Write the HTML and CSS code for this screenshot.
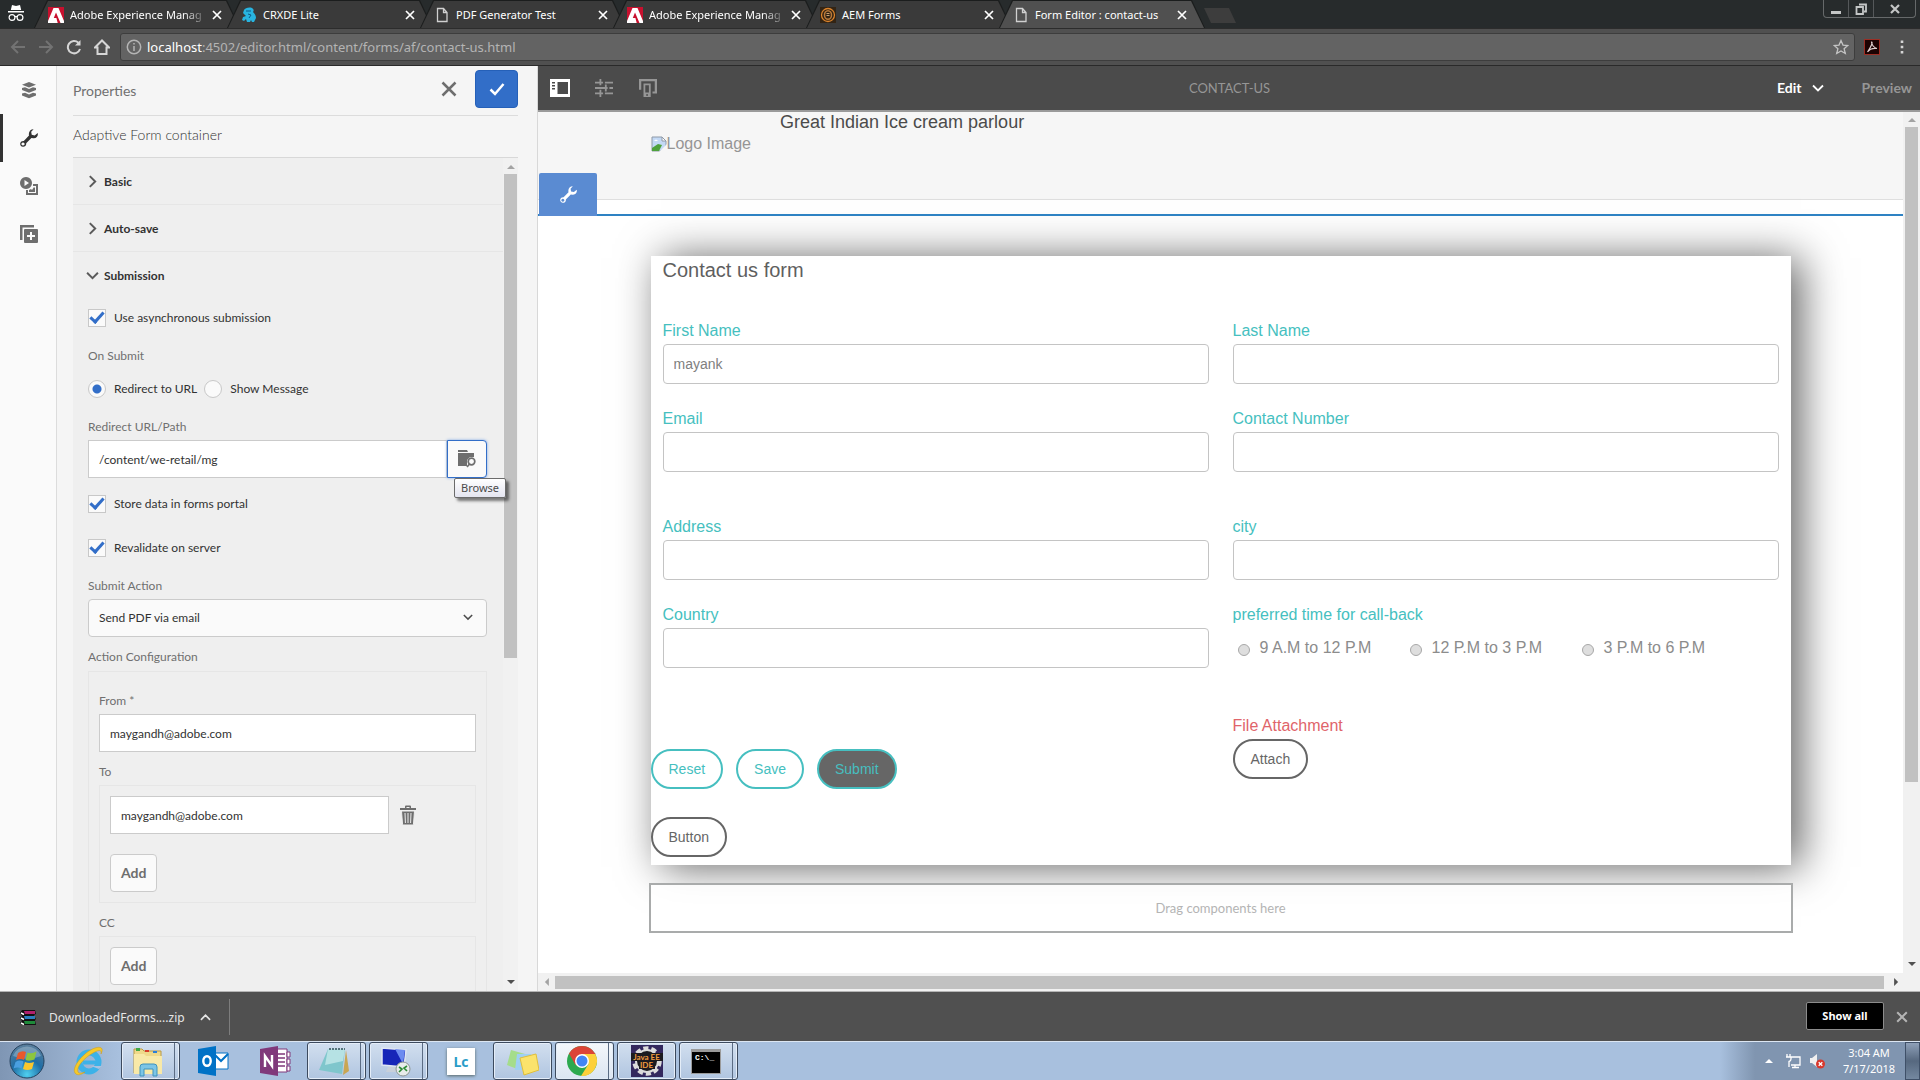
FILE: index.html
```html
<!DOCTYPE html>
<html lang="en">
  <head>
    <meta charset="UTF-8" />
    <meta name="viewport" content="width=device-width, initial-scale=1.0" />
    <title>Form Editor : contact-us</title>
    <link rel="stylesheet" href="styles.css">
  </head>
  <body>
    <!-- shared symbols -->
    <svg class="symbols" aria-hidden="true">
      <symbol id="adobe" viewBox="0 0 16 16">
        <rect width="16" height="16" fill="#c8102e" />
        <path d="M0 16V14L5.500 1h5L16 14v2h-3.500L8 5.500 5.800 11h2.600l1.300 5z" fill="#fff" />
      </symbol>
      <symbol id="page" viewBox="0 0 12 16">
        <path d="M1.500 1.500h6l3.500 4v9h-9.500zM7.500 1.500v4H11" fill="none" stroke="#d0d0d0" stroke-width="1.300" />
      </symbol>
      <symbol id="cross" viewBox="0 0 10 10">
        <path d="M1 1l8 8M9 1L1 9" fill="none" stroke="currentColor" stroke-width="1.700" />
      </symbol>
      <symbol id="wrench" viewBox="0 0 18 18">
        <path fill="currentColor" fill-rule="evenodd" d="M13.600 0.200L11.200 2.800l.5 3 3 .6L17.700 4c.7 2.500-1 5.400-4.200 5.200L11.400 9l-5.200 5.200c.3 2-1.200 3.700-3.200 3.600C1 17.700-.2 15.800.3 14.200c.4-1.600 1.900-2.500 3.500-2.200L9 6.600C8.200 2.900 10.400.2 13.600.2zM3 13.400a1.600 1.600 0 1 0 .01 0z" />
      </symbol>
      <symbol id="chevron" viewBox="0 0 12 12">
        <path d="M1 3.500l5 5 5-5" fill="none" stroke="currentColor" stroke-width="1.800" />
      </symbol>
    </svg>

    <!-- tab strip -->
    <header class="tabs">
      <svg class="incognito" viewBox="0 0 18 18">
        <path d="M5 1l4 1 4-1 1.200 5H3.800zM1 7h16v1.500H1z" fill="#fff" />
        <g fill="none" stroke="#fff" stroke-width="1.200"><circle cx="5" cy="13.500" r="2.900" /><circle cx="13" cy="13.500" r="2.900" /><path d="M8 13q1-1 2 0" /></g>
      </svg>
      <div class="tab"><svg class="favicon"><use href="#adobe" /></svg><span class="tab-title fade">Adobe Experience Manag</span><button class="tab-close" aria-label="Close tab"><svg><use href="#cross" /></svg></button></div>
      <div class="tab">
        <svg class="favicon" viewBox="0 0 16 16"><path d="M3 3c1-2 5-3 8-2 2 1 2 3 1 4 2 2 3 4 3 6l-2 4h-2l-1-2-1 2H6l-1-3-2 2-2-1 1-3 3-1-3-3z" fill="#28b4e0" /><path d="M5 4h5M7 7l3 1-2 3" stroke="#0d5a8a" fill="none" /></svg>
        <span class="tab-title">CRXDE Lite</span><button class="tab-close" aria-label="Close tab"><svg><use href="#cross" /></svg></button>
      </div>
      <div class="tab"><svg class="favicon"><use href="#page" /></svg><span class="tab-title">PDF Generator Test</span><button class="tab-close" aria-label="Close tab"><svg><use href="#cross" /></svg></button></div>
      <div class="tab"><svg class="favicon"><use href="#adobe" /></svg><span class="tab-title fade">Adobe Experience Manag</span><button class="tab-close" aria-label="Close tab"><svg><use href="#cross" /></svg></button></div>
      <div class="tab">
        <svg class="favicon" viewBox="0 0 16 16"><rect width="16" height="16" fill="#332414" /><circle cx="8" cy="8" r="6.500" fill="none" stroke="#d9822b" stroke-width="1.300" /><ellipse cx="8" cy="8" rx="3.500" ry="4.300" fill="none" stroke="#b9793a" stroke-width="1.500" /><path d="M6.500 6.500h3M6.500 8.500h3" stroke="#c9a070" /></svg>
        <span class="tab-title">AEM Forms</span><button class="tab-close" aria-label="Close tab"><svg><use href="#cross" /></svg></button>
      </div>
      <div class="tab active"><svg class="favicon"><use href="#page" /></svg><span class="tab-title">Form Editor : contact-us</span><button class="tab-close" aria-label="Close tab"><svg><use href="#cross" /></svg></button></div>
      <button class="new-tab" aria-label="New tab"></button>
      <div class="window-buttons">
        <button aria-label="Minimize"><svg viewBox="0 0 12 12"><path d="M1 8h10v3H1z" fill="#c4c6c6" /></svg></button>
        <button aria-label="Restore"><svg viewBox="0 0 12 12"><path d="M4 1.500h7v7H9M1.500 4h6.500v7H1.500z" fill="none" stroke="#c4c6c6" stroke-width="1.800" /></svg></button>
        <button class="wide" aria-label="Close"><svg viewBox="0 0 12 12"><path d="M2 2l8 8M10 2l-8 8" stroke="#c4c6c6" stroke-width="2.200" /></svg></button>
      </div>
    </header>

    <!-- address bar -->
    <nav class="address-bar">
      <button class="dim" aria-label="Back"><svg viewBox="0 0 16 16"><path d="M15 8H2M8 2L2 8l6 6" /></svg></button>
      <button class="dim" aria-label="Forward"><svg viewBox="0 0 16 16"><path d="M1 8h13M8 2l6 6-6 6" /></svg></button>
      <button aria-label="Reload"><svg viewBox="0 0 16 16"><path d="M14 10a6.200 6.200 0 1 1-1.600-6.300" /><path d="M14.500 1v5.500H9z" fill="#d6d6d6" stroke="none" /></svg></button>
      <button aria-label="Home"><svg viewBox="0 0 16 16"><path d="M1 8.500L8 1.500l7 7h-2.500V15h-9V8.500z" /></svg></button>
      <div class="omnibox">
        <svg class="info" viewBox="0 0 16 16"><circle cx="8" cy="8" r="6.700" /><path d="M8 7v5M8 4v1.600" /></svg>
        <span class="url"><b>localhost</b>:4502/editor.html/content/forms/af/contact-us.html</span>
        <svg class="star" viewBox="0 0 16 16"><path d="M8 1.500l2 4.600 4.800.4-3.700 3.200 1.200 4.800L8 12l-4.300 2.500 1.200-4.800L1.200 6.500 6 6.100z" /></svg>
      </div>
      <svg class="pdf" viewBox="0 0 16 16"><rect x="0.500" y="0.500" width="15" height="15" fill="#1c0202" stroke="#9c2e24" /><path d="M7.500 3c1.500 0 0 4-4 10 2-3 5-4 9.500-3.500-3-.5-5.500-4-5.500-6.500z" fill="none" stroke="#e0d0d0" stroke-width="1.200" /></svg>
      <button class="menu" aria-label="Menu"><svg viewBox="0 0 16 16"><path d="M6.700 1.500h2.600v2.600H6.700zM6.700 6.700h2.600v2.600H6.700zM6.700 11.900h2.600v2.600H6.700z" fill="#d6d6d6" stroke="none" /></svg></button>
    </nav>

    <main class="editor">
      <!-- icon rail -->
      <nav class="rail">
        <button aria-label="Content tree"><svg viewBox="0 0 18 18"><path d="M9 1l7 2.700L9 6.400 2 3.700z" /><path d="M2 7l3-.7L9 8l4-1.700 3 .7v2l-7 2.800L2 9z" /><path d="M2 12.500l3-.7 4 1.700 4-1.700 3 .7v2L9 17.300 2 14.500z" /></svg></button>
        <button class="selected" aria-label="Properties"><svg><use href="#wrench" /></svg></button>
        <button aria-label="Assets"><svg viewBox="0 0 18 18"><path fill-rule="evenodd" d="M6 0a6 6 0 1 0 .01 0zM4.500 3v6l4.500-3z" /><path d="M13 7h5v11H6v-5h2v3h8V9h-3z" /><path d="M9 15v-2l2-1 1 1 2-3 1 1v4z" /></svg></button>
        <button aria-label="Components"><svg viewBox="0 0 18 18"><path d="M0 0h14v2.500H2.500V15H0z" /><path fill-rule="evenodd" d="M5 4h12q1 0 1 1v12q0 1-1 1H5q-1 0-1-1V5q0-1 1-1zm5 3v3H7v2h3v3h2v-3h3v-2h-3V7z" /></svg></button>
      </nav>

      <!-- properties panel -->
      <aside class="panel">
        <div class="panel-header">
          <h1>Properties</h1>
          <button class="cancel" aria-label="Cancel"><svg viewBox="0 0 16 16"><path d="M1.500 1.500l13 13M14.500 1.500l-13 13" /></svg></button>
          <button class="done" aria-label="Done"><svg viewBox="0 0 16 16"><path d="M1.500 8.500l4.500 4.500 8.500-10" /></svg></button>
        </div>
        <h2>Adaptive Form container</h2>
        <div class="panel-body">
          <form class="sections">
            <button type="button" class="section"><svg class="right"><use href="#chevron" /></svg>Basic</button>
            <button type="button" class="section"><svg class="right"><use href="#chevron" /></svg>Auto-save</button>
            <button type="button" class="section open"><svg><use href="#chevron" /></svg>Submission</button>
            <div class="section-body">
              <label class="check"><input type="checkbox" checked />Use asynchronous submission</label>
              <div class="label spaced">On Submit</div>
              <div class="radios">
                <label class="check"><input type="radio" name="onsubmit" checked />Redirect to URL</label>
                <label class="check"><input type="radio" name="onsubmit" />Show Message</label>
              </div>
              <label class="label spaced" for="redirect">Redirect URL/Path</label>
              <div class="path">
                <input type="text" id="redirect" value="/content/we-retail/mg" />
                <button type="button" class="browse" aria-label="Browse"><svg viewBox="0 0 18 18"><path d="M0 0h9l1 2H0zM0 3h16v4H12L9 10v6H0z" /><circle cx="13.500" cy="11.500" r="3.300" /><path class="handle" d="M11.500 14L9 17" /></svg></button>
                <span class="tooltip">Browse</span>
              </div>
              <label class="check store"><input type="checkbox" checked />Store data in forms portal</label>
              <label class="check revalidate"><input type="checkbox" checked />Revalidate on server</label>
              <label class="label spaced" for="action">Submit Action</label>
              <div class="select">
                <select id="action"><option>Send PDF via email</option></select>
                <svg><use href="#chevron" /></svg>
              </div>
              <div class="label">Action Configuration</div>
              <div class="group config">
                <label class="label" for="from">From *</label>
                <input type="text" id="from" value="maygandh@adobe.com" />
                <label class="label" for="to">To</label>
                <div class="group">
                  <div class="entry">
                    <input type="text" id="to" value="maygandh@adobe.com" />
                    <button type="button" class="trash" aria-label="Delete"><svg viewBox="0 0 16 20"><path d="M5 3V1.500q0-1 1-1h4q1 0 1 1V3h5v2H0V3zm1.500 0h3V2h-3z" fill-rule="evenodd" /><path d="M1.500 6h13l-1 13q-.1 1-1 1h-9q-.9 0-1-1zM5 8l.4 10M8 8v10M11 8l-.4 10" stroke="#efefef" /></svg></button>
                  </div>
                  <button type="button" class="add">Add</button>
                </div>
                <div class="label">CC</div>
                <div class="group">
                  <button type="button" class="add">Add</button>
                </div>
              </div>
            </div>
          </form>
          <div class="scrollbar vertical">
            <svg viewBox="0 0 10 6"><path d="M0 6l5-5 5 5z" /></svg>
            <div class="thumb panel-thumb"></div>
            <svg class="dark" viewBox="0 0 10 6"><path d="M0 0l5 5 5-5z" /></svg>
          </div>
        </div>
      </aside>

      <!-- form canvas -->
      <section class="stage">
        <div class="toolbar">
          <button class="on" aria-label="Toggle side panel"><svg viewBox="0 0 20 18"><path fill-rule="evenodd" d="M0 0h20v18H0zM2 3v1.500h3V3zM2 6v1.500h3V6zM2 9v1.500h3V9zM7.500 3v12H18V3z" /></svg></button>
          <button aria-label="Page properties"><svg viewBox="0 0 20 20"><path d="M0 3h5V0h2v3h2v2H7v2H5V5H0zM11 3h9v2h-9zM0 9h11V6h2v3h1v2h-1v3h-2v-3H0zM16 9h4v2h-4zM0 15h5v-3h2v3h2v2H7v3H5v-3H0zM11 15h9v2h-9z" /></svg></button>
          <button aria-label="Emulator"><svg viewBox="0 0 20 20"><path fill-rule="evenodd" d="M0 0h20v16h-5v-2h2.500V2.500h-15V12H0zM5 5h8v15H5zM7 7v8h4V7zM8 17v1.500h2V17z" /></svg></button>
          <span class="doc-title">CONTACT-US</span>
          <button class="mode on">Edit<svg><use href="#chevron" /></svg></button>
          <button class="preview">Preview</button>
        </div>
        <div class="viewport">
          <div class="canvas">
            <div class="form-header">
              <div class="container header-row">
                <span class="logo"><svg viewBox="0 0 16 16"><path d="M1 1h10l4 4v10H1z" fill="#c3d9f5" stroke="#8f9aa8" /><path d="M1 15v-3l6-4 4 1-3 6z" fill="#4fa23c" /><path d="M16 8L8 16h8z" fill="#f6f6f6" /><path d="M3 5q2-3 4 0z" fill="#fff" /><path d="M11 1v4h4z" fill="#fff" stroke="#8f9aa8" /></svg>Logo Image</span>
                <span class="form-name">Great Indian Ice cream parlour</span>
              </div>
            </div>
            <button class="configure" aria-label="Configure"><svg><use href="#wrench" /></svg></button>
            <form class="container card">
              <h3>Contact us form</h3>
              <div class="fields">
                <div class="field"><label for="first">First Name</label><input type="text" id="first" value="mayank" /></div>
                <div class="field"><label for="last">Last Name</label><input type="text" id="last" /></div>
                <div class="field"><label for="email">Email</label><input type="text" id="email" /></div>
                <div class="field"><label for="phone">Contact Number</label><input type="text" id="phone" /></div>
              </div>
              <div class="fields address">
                <div class="field"><label for="address">Address</label><input type="text" id="address" /></div>
                <div class="field"><label for="city">city</label><input type="text" id="city" /></div>
                <div class="field"><label for="country">Country</label><input type="text" id="country" /></div>
                <div class="field" role="group" aria-labelledby="callback">
                  <span class="caption" id="callback">preferred time for call-back</span>
                  <div class="times">
                    <label><input type="radio" name="time" />9 A.M to 12 P.M</label>
                    <label><input type="radio" name="time" />12 P.M to 3 P.M</label>
                    <label><input type="radio" name="time" />3 P.M to 6 P.M</label>
                  </div>
                </div>
              </div>
              <div class="fields actions">
                <div class="buttons">
                  <div class="button-row">
                    <button type="button" class="pill teal">Reset</button>
                    <button type="button" class="pill teal">Save</button>
                    <button type="button" class="pill teal filled">Submit</button>
                  </div>
                  <button type="button" class="pill">Button</button>
                </div>
                <div class="field attachment"><span class="caption">File Attachment</span><button type="button" class="pill">Attach</button></div>
              </div>
            </form>
            <div class="container dropzone">Drag components here</div>
          </div>
          <div class="scrollbar vertical">
            <svg viewBox="0 0 10 6"><path d="M0 6l5-5 5 5z" /></svg>
            <div class="thumb page-thumb"></div>
            <svg class="dark" viewBox="0 0 10 6"><path d="M0 0l5 5 5-5z" /></svg>
          </div>
        </div>
        <div class="scrollbar horizontal">
          <svg viewBox="0 0 6 10"><path d="M6 0L1 5l5 5z" /></svg>
          <div class="thumb"></div>
          <svg class="dark" viewBox="0 0 6 10"><path d="M0 0l5 5-5 5z" /></svg>
        </div>
      </section>
    </main>

    <!-- downloads -->
    <div class="downloads">
      <div class="download">
        <svg class="zip" viewBox="0 0 16 16"><path d="M2 0h13l1 4-2 1 2 4-1 1 1 5H2L0 13l2-2-2-3 2-2-2-3z" fill="#111" /><path d="M4 1h11v3H5z" fill="#b0206c" /><path d="M4 6h11v3H5z" fill="#2a7fc0" /><path d="M4 11h11v3H5z" fill="#1f8a3a" /><path d="M1 3l3 1.500M1 8l3 1.500M1 13l3 1.500" stroke="#fff" stroke-width="1.500" /></svg>
        <span>DownloadedForms....zip</span>
        <button aria-label="Options"><svg class="up"><use href="#chevron" /></svg></button>
      </div>
      <button class="show-all">Show all</button>
      <button class="bar-close" aria-label="Close"><svg><use href="#cross" /></svg></button>
    </div>

    <!-- taskbar -->
    <footer class="taskbar">
      <button class="start" aria-label="Start">
        <svg viewBox="0 0 36 36"><defs><radialGradient id="orb" cx="50%" cy="90%" r="90%"><stop offset="0" stop-color="#4fd0f0" /><stop offset="0.500" stop-color="#1f6ea6" /><stop offset="1" stop-color="#5d7f9c" /></radialGradient></defs><circle cx="18" cy="18" r="17" fill="url(#orb)" stroke="#26425e" /><path d="M4 13a15 15 0 0 1 28 0q-14 6-28 0z" fill="#fff" opacity=".25" /><path d="M9 10q4-3 8-1l-2 8q-4-2-8 0z" fill="#e8582c" /><path d="M18.500 9.500q4 2 9-1l-2 8q-5 2-9 .5z" fill="#8cc63e" /><path d="M6.500 19q4-2.500 8-.5l-2 7q-4-2-8 0z" fill="#4a9fe0" /><path d="M16 19q4 2 9 0l-2 7q-5 2-9 0z" fill="#fbc72d" /></svg>
      </button>
      <button class="task" aria-label="Internet Explorer"><svg viewBox="0 0 32 32"><circle cx="16" cy="17" r="9.500" fill="none" stroke="#3cb2e8" stroke-width="6" /><path d="M10 15.500h15v4H10z" fill="#3cb2e8" /><path d="M18 21h11l-3 3z" fill="#aac2df" /><path d="M2 28C-2 22 12 6 22 3c6-2 9 0 6 6 1-5-3-4-8-1C11 13 3 22 5 27c1 2 4 1 7 0-4 3-8 4-10 1z" fill="#f5c92a" stroke="#cf9a15" stroke-width=".5" /></svg></button>
      <button class="task running stacked" aria-label="Explorer"><svg viewBox="0 0 32 32"><path d="M2 4h8l2 2h17v22H2z" fill="#efd98a" stroke="#b99a45" /><path d="M4 3h4v3H4z" fill="#3fa845" /><path d="M13 5h4v2h-4z" fill="#d83b2b" /><path d="M21 6h4v2h-4z" fill="#2b7fd8" /><path d="M2 9h10l2 2h16v18H2z" fill="#f8e9a8" /><path d="M8 31v-9q0-3 3-3h11q3 0 3 3v9h-4v-7h-9v7z" fill="#7cc5e6" stroke="#3f92bd" /></svg></button>
      <button class="task" aria-label="Outlook"><svg viewBox="0 0 32 32"><path d="M17 8h14v16H17z" fill="#fff" stroke="#0072c6" /><path d="M18 10l6 6 7-7" fill="none" stroke="#0072c6" stroke-width="2" /><path d="M1 4l18-3v30L1 28z" fill="#0072c6" /><ellipse cx="10" cy="16" rx="3.700" ry="4.800" fill="none" stroke="#fff" stroke-width="2.400" /></svg></button>
      <button class="task" aria-label="OneNote"><svg viewBox="0 0 32 32"><path d="M16 4h12v23H16z" fill="#fff" stroke="#80397b" /><path d="M28 7h3v5h-3zM28 14h3v5h-3zM28 21h3v5h-3z" fill="#fff" stroke="#80397b" /><path d="M19 9h7M19 13h7M19 17h7M19 21h7" stroke="#80397b" stroke-width="1.500" /><path d="M1 4l18-3v30L1 28z" fill="#80397b" /><path d="M6 22V11l7 10V10" fill="none" stroke="#fff" stroke-width="2.400" /></svg></button>
      <button class="task running stacked" aria-label="Notepad"><svg viewBox="0 0 32 32"><path d="M28 5l3 21-6 4z" fill="#c9a653" /><path d="M10 4h17l-3 25-23-4z" fill="#7fc6cc" /><path d="M10 4h17l-2 12-18 4z" fill="#b6e2e4" /><path d="M11 4h16" stroke="#56737c" stroke-width="2" stroke-dasharray="2 1" /></svg></button>
      <button class="task running stacked" aria-label="Remote Desktop"><svg viewBox="0 0 32 32"><path d="M2 3l24 2-2 17-22-2z" fill="#1625b8" stroke="#dfe6f2" stroke-width="1.500" /><path d="M15 4l10 1-2 14z" fill="#6c8bf0" /><path d="M8 22h8v5H6z" fill="#c8d0da" /><circle cx="23" cy="24" r="7" fill="#e8ecea" stroke="#8d9693" /><path d="M19 22l3 2-3 3M27 21l-3 2 3 3" fill="none" stroke="#2c8b35" stroke-width="1.600" /></svg></button>
      <button class="task" aria-label="LiveCycle"><span class="lc">Lc</span></button>
      <button class="task running" aria-label="Sticky Notes"><svg viewBox="0 0 32 32"><path d="M4 5l14 4-5 16-13-5z" fill="#a5dd8b" /><path d="M10 9h14v16H8z" fill="#9fd0f2" /><path d="M13 13l16-4 3 16-15 5z" fill="#fbe36c" stroke="#e0bf3c" /></svg></button>
      <button class="task running stacked bright" aria-label="Chrome"><svg viewBox="0 0 32 32"><circle cx="16" cy="16" r="15" fill="#2da94f" /><path d="M3 8.500A15 15 0 0 1 29 8.500L30 9H16l-6.500 11z" fill="#dc4437" /><path d="M29.200 9A15 15 0 0 1 15 31l7.500-12L16 9z" fill="#fdd03b" /><circle cx="16" cy="16" r="7" fill="#fff" /><circle cx="16" cy="16" r="5.500" fill="#4285f4" /></svg></button>
      <button class="task running" aria-label="Java EE IDE">
        <span class="ide">
          <svg viewBox="0 0 32 32"><rect width="32" height="32" fill="#33285e" /><circle cx="16" cy="16" r="12.500" fill="none" stroke="#dcdcdc" stroke-width="4.500" stroke-dasharray="5 2.850" /><circle cx="16" cy="16" r="11" fill="#1b1b20" stroke="#dcdcdc" stroke-width="2" /><path d="M0 8h32v8H24v8H8v-8H0z" fill="#1b1b20" /></svg>
          <b>Java EE<br>IDE</b>
        </span>
      </button>
      <button class="task running stacked" aria-label="Command Prompt"><span class="cmd">C:\_</span></button>

      <div class="tray">
        <button aria-label="Show hidden icons"><svg viewBox="0 0 16 16"><path d="M4 10l4-4 4 4z" fill="#fff" /></svg></button>
        <svg viewBox="0 0 16 16"><path d="M4 4h11v8H6M10 12v2M7 14.500h7M2 1v3M5 1v3M1 4h5v2q0 2-2 2.500V14" fill="none" stroke="#fff" stroke-width="1.300" /></svg>
        <svg viewBox="0 0 16 16"><path d="M1 5h2l5-4v13l-5-4H1z" fill="#f0f0f0" /><circle cx="11.500" cy="11" r="4.500" fill="#d8382c" /><path d="M9.700 9.200l3.600 3.600M13.300 9.200l-3.600 3.600" stroke="#fff" stroke-width="1.300" /></svg>
        <div class="clock">3:04 AM<br>7/17/2018</div>
        <button class="show-desktop" aria-label="Show desktop"></button>
      </div>
    </footer>
  </body>
</html>
```

FILE: styles.css
```css
*,
*::before,
*::after {
  box-sizing: border-box;
}
body {
  margin: 0;
  height: 100vh;
  display: flex;
  flex-direction: column;
  overflow: hidden;
  font-family: Lato, 'Open Sans', sans-serif;
  font-size: 12px;
  line-height: 16px;
  color: #4b4b4b;
  background-color: #f5f5f5;
}
button,
input,
select {
  font: inherit;
  color: inherit;
  margin: 0;
}
button {
  background: none;
  border: none;
  padding: 0;
  display: flex;
  align-items: center;
  justify-content: center;
}
h1,
h2,
h3 {
  margin: 0;
  font-weight: normal;
}
svg {
  display: block;
  flex: none;
}
.symbols {
  position: absolute;
  width: 0;
  height: 0;
}

/* tab strip */
.tabs {
  display: flex;
  height: 28px;
  flex: none;
  background-color: #272b2c;
  font-family: 'Noto Sans', sans-serif;
  font-size: 11px;
  color: #fff;
}
.incognito {
  width: 18px;
  height: 18px;
  margin: 4px 9px 0 7px;
}
.tab {
  position: relative;
  display: flex;
  align-items: center;
  width: 206px;
  margin-right: -13px;
  padding: 1px 18px 0 14px;
  background-color: #1b1d1d;
  clip-path: polygon(0 100%, 13px 0, calc(100% - 13px) 0, 100% 100%);
}
.tab::before {
  content: '';
  position: absolute;
  inset: 1px 1px 0;
  background-color: #3a3a3a;
  clip-path: polygon(0 100%, 13px 0, calc(100% - 13px) 0, 100% 100%);
}
.tab.active {
  z-index: 1;
}
.tab.active::before {
  background-color: #505050;
}
.tab > * {
  position: relative;
}
.favicon {
  width: 16px;
  height: 16px;
}
.tab-title {
  flex: 1;
  margin: 0 4px 0 6px;
  white-space: nowrap;
}
.fade {
  mask-image: linear-gradient(90deg, #000 82%, transparent);
}
.tab-close svg {
  width: 10px;
  height: 10px;
}
.new-tab {
  width: 32px;
  height: 15px;
  margin: 8px 0 0 12px;
  background-color: #3d3d3d;
  clip-path: polygon(0 0, 25px 0, 100% 100%, 7px 100%);
}
.window-buttons {
  display: flex;
  height: 18px;
  margin: 0 4px 0 auto;
  border: 1px solid #66696a;
  border-top: none;
  border-radius: 0 0 4px 4px;
}
.window-buttons button {
  width: 25px;
  border-right: 1px solid #55585a;
}
.window-buttons .wide {
  width: 41px;
  border: none;
}
.window-buttons svg {
  width: 12px;
  height: 12px;
}

/* address bar */
.address-bar {
  display: flex;
  align-items: center;
  flex: none;
  height: 38px;
  padding: 0 4px;
  background-color: #505050;
  border-top: 1px solid #2c2c2c;
  border-bottom: 1px solid #2a2a2a;
  font-family: 'Noto Sans', sans-serif;
  font-size: 13px;
}
.address-bar button {
  width: 28px;
}
.address-bar svg {
  width: 16px;
  height: 16px;
  fill: none;
  stroke: #d6d6d6;
  stroke-width: 2;
}
.address-bar .dim svg {
  stroke: #737373;
}
.omnibox {
  flex: 1;
  display: flex;
  align-items: center;
  gap: 5px;
  height: 28px;
  margin: 0 9px 0 4px;
  padding: 0 5px;
  background-color: #636363;
  border: 1px solid #3d3d3d;
  border-radius: 3px;
}
.address-bar .info {
  stroke: #b5b5b5;
  stroke-width: 1.5;
}
.address-bar .star {
  stroke: #c4c4c4;
  stroke-width: 1.3;
}
.url {
  flex: 1;
  color: #b4b4b4;
}
.url b {
  font-weight: normal;
  color: #fff;
}
.address-bar .pdf {
  stroke-width: 1;
}
.address-bar .menu {
  margin-left: 8px;
  width: 28px;
}

.editor {
  flex: 1;
  min-height: 0;
  display: flex;
}

/* icon rail */
.rail {
  flex: none;
  width: 57px;
  background-color: #fafafa;
  border-right: 1px solid #dcdcdc;
}
.rail button {
  width: 100%;
  height: 48px;
  color: #6e6e6e;
  border-left: 3px solid transparent;
  padding-right: 2px;
}
.rail svg {
  width: 18px;
  height: 18px;
  fill: currentColor;
}
.rail .selected {
  color: #323232;
  border-left-color: #323232;
}

/* properties panel */
.panel {
  flex: none;
  width: 481px;
  display: flex;
  flex-direction: column;
  padding: 0 19px 0 16px;
  background-color: #f5f5f5;
  border-right: 1px solid #d8d8d8;
}
.panel-header {
  display: flex;
  align-items: center;
  height: 50px;
  padding-bottom: 4px;
  border-bottom: 1px solid #dcdcdc;
}
.panel h1 {
  flex: 1;
  font-size: 14px;
  padding-top: 4px;
  color: #707070;
}
.cancel {
  width: 30px;
  height: 38px;
  margin-right: 11px;
}
.cancel svg,
.done svg {
  width: 16px;
  height: 16px;
  fill: none;
  stroke: #6e6e6e;
  stroke-width: 2.5;
}
.done {
  width: 43px;
  height: 38px;
  background-color: #326ec8;
  border: 1px solid #2560b8;
  border-radius: 4px;
}
.done svg {
  stroke: #fff;
}
.panel h2 {
  font-size: 14px;
  padding: 11px 0 14px;
  font-weight: 300;
  color: #323232;
}
.panel-body {
  flex: 1;
  min-height: 0;
  display: flex;
  overflow: hidden;
  border-top: 1px solid #d8d8d8;
}
.sections {
  flex: 1;
  background-color: #efefef;
}
.section {
  justify-content: flex-start;
  gap: 5px;
  width: 100%;
  height: 47px;
  padding: 1px 0 0 13px;
  border-bottom: 1px solid #e6e6e6;
  font-weight: bold;
  color: #323232;
}
.section.open {
  padding-top: 0;
  border-bottom: none;
}
.section svg {
  width: 13px;
  height: 13px;
  color: #5a5a5a;
}
.section .right {
  transform: rotate(-90deg);
}
.section-body {
  padding: 10px 16px 0 15px;
}
.label {
  display: block;
  margin: 12px 0 5px;
  color: #707070;
}
.spaced {
  margin-top: 21px;
}
.check {
  display: flex;
  align-items: center;
  gap: 8px;
  height: 18px;
  color: #323232;
}
.check input {
  appearance: none;
  width: 18px;
  height: 18px;
  border: 1px solid #c8c8c8;
  background-color: #fafafa;
}
.check input[type='radio'] {
  border-radius: 50%;
}
.check input[type='radio']:checked {
  background: radial-gradient(circle, #326ec8 4px, #fafafa 5px);
}
.check input[type='checkbox']:checked::before {
  content: '';
  display: block;
  width: 14px;
  height: 8px;
  margin: 2px 0 0 1px;
  border: solid #326ec8;
  border-width: 0 0 3px 3px;
  transform: rotate(-48deg);
}
.radios {
  display: flex;
  gap: 7px;
  margin-top: 16px;
}
.section-body input[type='text'] {
  width: 100%;
  height: 38px;
  padding: 0 10px;
  border: 1px solid #cbcbcb;
  background-color: #fff;
  color: #323232;
}
.path {
  position: relative;
  display: flex;
}
.browse {
  flex: none;
  width: 40px;
  height: 38px;
  background-color: #fafafa;
  border: 1px solid #326ec8;
  border-radius: 0 4px 4px 0;
  box-shadow: 0 0 3px #7ca6e6;
}
.browse svg {
  width: 18px;
  height: 18px;
  fill: #6e6e6e;
}
.browse circle {
  fill: #fafafa;
  stroke: #6e6e6e;
  stroke-width: 1.7;
}
.browse .handle {
  stroke: #6e6e6e;
  stroke-width: 1.7;
}
.tooltip {
  position: absolute;
  z-index: 1;
  left: 366px;
  top: 38px;
  padding: 1px 6px;
  border: 1px solid #6b6b6b;
  border-radius: 2px;
  background: linear-gradient(#fff, #e4e5f0);
  box-shadow: 3px 3px 3px rgba(0, 0, 0, 0.5);
  font-family: 'Noto Sans', sans-serif;
  font-size: 11px;
}
.store {
  margin-top: 17px;
}
.revalidate {
  margin-top: 26px;
}
.select {
  position: relative;
}
.select select {
  appearance: none;
  display: block;
  width: 100%;
  height: 38px;
  padding: 0 10px;
  border: 1px solid #cbcbcb;
  border-radius: 4px;
  background-color: #fafafa;
  color: #323232;
}
.select svg {
  position: absolute;
  right: 14px;
  top: 13px;
  width: 10px;
  height: 10px;
}
.group {
  padding: 10px;
  border: 1px solid #e6e6e6;
}
.config {
  margin-top: 6px;
  padding-top: 9px;
}
.entry {
  display: flex;
  gap: 11px;
  margin-bottom: 20px;
}
.section-body .entry input {
  width: 279px;
}
.trash svg {
  width: 16px;
  height: 20px;
  fill: #6e6e6e;
}
.add {
  height: 38px;
  padding: 0 10px;
  background-color: #fafafa;
  border: 1px solid #cbcbcb;
  border-radius: 4px;
  font-size: 14px;
  font-weight: bold;
  color: #6e6e6e;
}

/* scrollbars */
.scrollbar {
  flex: none;
  display: flex;
  align-items: center;
  background-color: #f1f1f1;
}
.scrollbar svg {
  width: 8px;
  height: 5px;
  fill: #a3a3a3;
}
.scrollbar .dark {
  fill: #505050;
}
.thumb {
  background-color: #c1c1c1;
}
.vertical {
  flex-direction: column;
  width: 17px;
  padding: 5px 2px 6px;
}
.vertical .dark {
  margin-top: auto;
}
.vertical .thumb {
  width: 13px;
  margin-top: 5px;
}
.panel .vertical {
  width: 15px;
  padding: 6px 1px;
}
.panel-thumb {
  height: 59%;
}
.page-thumb {
  height: 77%;
}
.horizontal {
  height: 18px;
  padding: 0 21px 0 6px;
  gap: 6px;
}
.horizontal svg {
  width: 5px;
  height: 8px;
}
.horizontal .thumb {
  flex: 1;
  height: 13px;
}
.horizontal .dark {
  margin-left: 4px;
}

/* form canvas */
.stage {
  flex: 1;
  min-width: 0;
  display: flex;
  flex-direction: column;
}
.toolbar {
  display: flex;
  align-items: center;
  gap: 24px;
  flex: none;
  height: 46px;
  padding: 0 8px 0 12px;
  background-color: #4b4b4b;
  border-bottom: 2px solid #9a9a9a;
  color: #969696;
  font-size: 13px;
}
.toolbar svg {
  width: 20px;
  height: 18px;
  fill: currentColor;
}
.toolbar .on {
  color: #fff;
}
.doc-title {
  flex: 1;
  text-align: center;
  padding-left: 24px;
}
.mode,
.preview {
  gap: 10px;
  font-size: 14px;
  font-weight: bold;
}
.toolbar .mode svg {
  width: 12px;
  height: 12px;
}
.preview {
  margin-left: 14px;
}
.viewport {
  flex: 1;
  min-height: 0;
  display: flex;
}
.canvas {
  position: relative;
  flex: 1;
  overflow: hidden;
  background-color: #fff;
  font-family: 'Liberation Sans', Arial, sans-serif;
  font-size: 16px;
  line-height: 20px;
}
.container {
  max-width: 1140px;
  margin: 0 auto;
}
.form-header {
  height: 88px;
  background-color: #f6f6f6;
  border-bottom: 1px solid #dfdfdf;
}
.header-row {
  display: flex;
  gap: 29px;
}
.logo {
  display: flex;
  align-items: center;
  height: 64px;
  color: #959595;
}
.logo svg {
  width: 16px;
  height: 16px;
}
.form-name {
  font-size: 18px;
}
.configure {
  position: absolute;
  left: 1px;
  top: 61px;
  width: 58px;
  height: 43px;
  background-color: #5a8bd2;
  border-radius: 2px 2px 0 0;
  color: #fff;
}
.configure svg {
  width: 17px;
  height: 17px;
}
.form-header::after {
  content: '';
  display: block;
  position: absolute;
  left: 0;
  right: 0;
  top: 102px;
  height: 2px;
  background-color: #2e82c3;
}
.card {
  margin-top: 56px;
  padding-bottom: 8px;
  background-color: #fff;
  box-shadow: 10px 2px 40px rgba(0, 0, 0, 0.62);
}
.card h3 {
  padding: 4px 12px;
  font-size: 20px;
  color: #5f5f5f;
}
.fields {
  display: grid;
  grid-template-columns: 1fr 1fr;
  row-gap: 24px;
  margin-top: 37px;
}
.fields.address {
  margin-top: 44px;
}
.fields.actions {
  margin-top: 47px;
}
.field {
  min-height: 64px;
  padding: 0 12px;
}
.field > label,
.caption {
  display: block;
  margin-bottom: 3px;
  color: #46bfc0;
}
.field input[type='text'] {
  display: block;
  width: 100%;
  height: 40px;
  padding: 0 10px;
  border: 1px solid #c4c4c4;
  border-radius: 4px;
  background-color: #fff;
  font-size: 14px;
  color: #808080;
}
.times {
  display: flex;
  padding: 10px 0 0 5px;
  color: #8c8c8c;
}
.times label {
  display: flex;
  gap: 10px;
  width: 172px;
}
.times input {
  appearance: none;
  width: 12px;
  height: 12px;
  margin-top: 6px;
  border: 1px solid #a8a8a8;
  border-radius: 50%;
  background-color: #dedede;
}
.buttons {
  padding-top: 33px;
}
.button-row {
  display: flex;
  gap: 13px;
  margin-bottom: 28px;
}
.pill {
  height: 40px;
  padding: 0 16px;
  border: 2px solid #666;
  border-radius: 20px;
  background-color: #fff;
  font-size: 14px;
  color: #666;
}
.pill.teal {
  border-color: #46bfc0;
  color: #46bfc0;
}
.pill.filled {
  background-color: #666;
}
.attachment .caption {
  color: #e0646a;
}
.dropzone {
  position: relative;
  max-width: 1144px;
  margin-top: 18px;
  padding: 13px;
  border: 2px solid #a9abab;
  background-color: rgba(255, 255, 255, 0.85);
  text-align: center;
  font-family: Lato, sans-serif;
  font-size: 13px;
  color: #b4b4b4;
}

/* downloads */
.downloads {
  display: flex;
  align-items: center;
  flex: none;
  height: 50px;
  padding: 0 12px 0 20px;
  background-color: #505050;
  border-top: 1px solid #b4b4b4;
  font-family: 'Noto Sans', sans-serif;
  color: #e6e6e6;
}
.download {
  display: flex;
  align-items: center;
  gap: 13px;
  height: 36px;
  padding: 2px 18px 0 0;
  margin-right: auto;
  border-right: 1px solid #7d7d7d;
}
.download button {
  padding-left: 2px;
}
.zip {
  width: 16px;
  height: 16px;
}
.up {
  width: 11px;
  height: 11px;
  transform: rotate(180deg);
}
.show-all {
  width: 78px;
  height: 28px;
  margin: 0 12px 2px 0;
  background-color: #000;
  border: 1px solid #8c8c8c;
  border-radius: 2px;
  font-size: 11px;
  font-weight: bold;
  color: #fff;
}
.bar-close {
  color: #b4b4b4;
}
.bar-close svg {
  width: 12px;
  height: 12px;
}

/* taskbar */
.taskbar {
  display: flex;
  flex: none;
  height: 39px;
  background: linear-gradient(90deg, #7f96b4 0, #a8c0de 120px, #a8c0de calc(100% - 200px), #8095b0 calc(100% - 165px));
  border-top: 1px solid #dce6f2;
}
.start {
  width: 54px;
  margin-right: 4px;
}
.start svg {
  width: 36px;
  height: 36px;
}
.task {
  position: relative;
  width: 62px;
}
.task svg {
  width: 32px;
  height: 32px;
}
.running {
  width: 59px;
  margin: 0 2px 0 1px;
  border: 1px solid #3c4a5e;
  border-radius: 3px;
  box-shadow: inset 0 0 0 1px #e4edf8;
  background: linear-gradient(#d2dfef, #b0c5e0);
}
.stacked {
  padding-right: 5px;
}
.stacked::after {
  content: '';
  position: absolute;
  right: 0;
  top: 0;
  bottom: 0;
  width: 5px;
  border: solid #5b6c84;
  border-width: 0 0 0 1px;
}
.bright {
  background: linear-gradient(#f4f7fb, #dbe5f2);
}
.lc {
  width: 28px;
  padding: 6px 0;
  background-color: #fff;
  box-shadow: 0 1px 3px #566;
  font: bold 14px 'Open Sans', sans-serif;
  line-height: 15px;
  color: #2a9cc8;
}
.ide {
  position: relative;
}
.ide b {
  position: absolute;
  left: 0;
  right: 0;
  top: 8px;
  font-size: 8px;
  line-height: 8px;
  color: #f09a3e;
  white-space: nowrap;
}
.cmd {
  width: 30px;
  height: 25px;
  padding: 1px 3px;
  border: 1px solid #9a9a9a;
  border-top-width: 3px;
  background-color: #000;
  font: bold 8px 'Liberation Mono', monospace;
  text-align: left;
  color: #fff;
}
.tray {
  display: flex;
  align-items: center;
  gap: 8px;
  margin-left: auto;
}
.tray svg {
  width: 16px;
  height: 16px;
}
.clock {
  width: 72px;
  text-align: center;
  font-family: 'Noto Sans', sans-serif;
  font-size: 11px;
  color: #fff;
}
.show-desktop {
  width: 15px;
  height: 38px;
  margin-left: -8px;
  border: 1px solid #3f5068;
  background: linear-gradient(#8ea0b8, #56687f 50%, #7488a0);
}
```
